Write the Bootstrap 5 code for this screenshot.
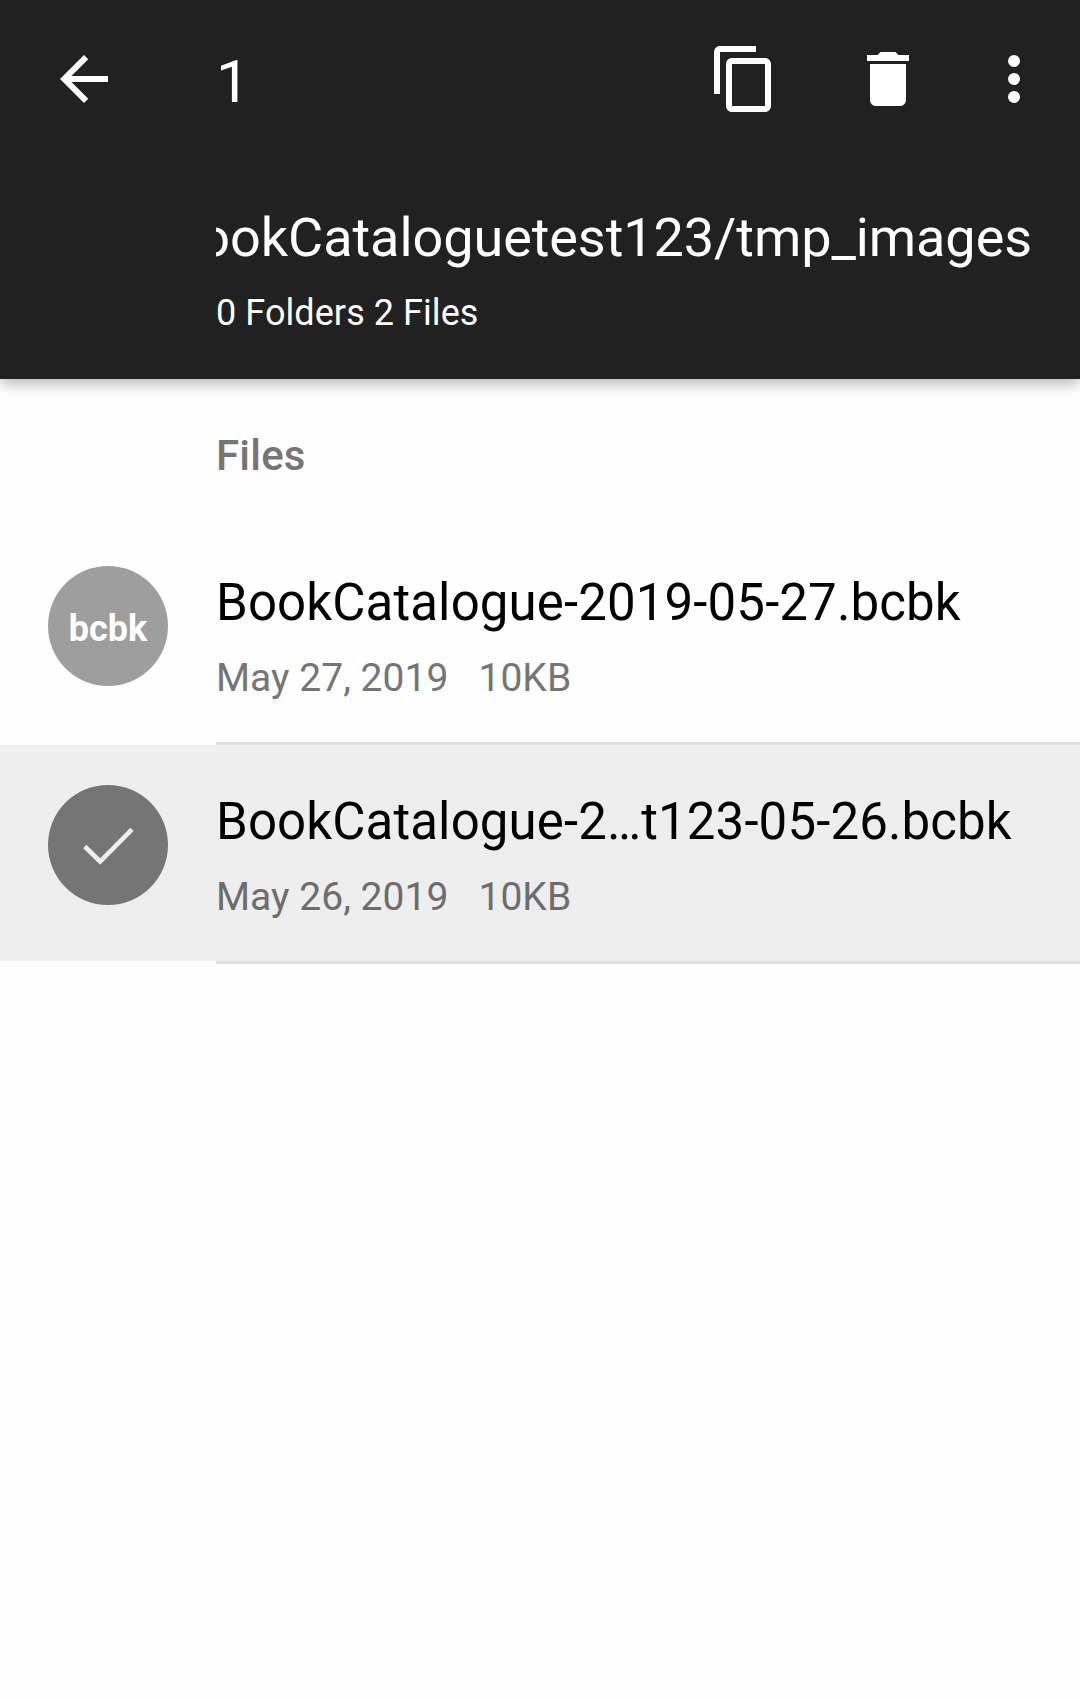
<!DOCTYPE html>
<html lang="en">
<head>
<meta charset="utf-8">
<meta name="viewport" content="width=device-width, initial-scale=1">
<title>Files</title>
<link href="https://cdn.jsdelivr.net/npm/bootstrap@5.3.0/dist/css/bootstrap.min.css" rel="stylesheet">
<style>
body { font-family: Roboto, "Liberation Sans", sans-serif; background: #fefefe; color: #000; min-height: 1699px; }
.app-head { background: #212121; height: 379px; box-shadow: 0 4px 14px rgba(0,0,0,.31); }
.tool-row { height: 158px; padding-left: 48px; padding-right: 30px; }
.tool-btn { width: 72px; height: 72px; color: #fff; }
.tool-btn svg { display: block; width: 72px; height: 72px; fill: currentColor; }
.sel-count { font-size: 60px; line-height: 70px; padding-top: 5px; margin-left: 96px; }
.gap-copy { margin-right: 72px; }
.gap-del { margin-right: 54px; }
.path-box { margin-left: 216px; width: 816px; padding-top: 47px; }
.path-text { font-size: 54px; line-height: 66px; white-space: nowrap; letter-spacing: -.07px; }
.path-info { font-size: 36px; line-height: 42px; margin-top: 21px; letter-spacing: .07px; }
.sect-head { height: 147px; padding: 52px 0 0 216px; font-size: 42px; line-height: 50px; font-weight: 500; color: #757575; letter-spacing: .2px; }
.file-row { height: 216px; padding-left: 48px; }
.file-row.is-picked { background: #eee; }
.file-line { height: 3px; margin-left: 216px; background: #dfdfdf; }
.disc { width: 120px; height: 120px; margin-top: 40px; background: #9e9e9e; font-size: 36px; font-weight: 700; line-height: 40px; padding-top: 5px; }
.is-picked .disc { background: #757575; padding-top: 0; }
.file-body { margin-left: 48px; padding-top: 47px; }
.file-name { font-size: 51px; line-height: 60px; white-space: nowrap; letter-spacing: .12px; }
.file-meta { font-size: 39px; line-height: 46px; margin-top: 22px; gap: 30px; color: #757575; letter-spacing: .04px; }
.is-picked .file-meta { color: #6d6d6d; }
</style>
<script src="https://cdn.jsdelivr.net/npm/bootstrap@5.3.0/dist/js/bootstrap.bundle.min.js"></script>
</head>
<body>
<header class="app-head text-white position-relative">
  <div class="tool-row d-flex align-items-center">
    <button class="tool-btn btn p-0 border-0" aria-label="Back"><svg viewBox="0 0 24 24"><path d="M20 11H7.830l5.590-5.590L12 4l-8 8 8 8 1.410-1.410L7.830 13H20v-2z"/></svg></button>
    <span class="sel-count me-auto">1</span>
    <button class="tool-btn btn p-0 border-0 gap-copy" aria-label="Copy"><svg viewBox="0 0 24 24"><path d="M16 1H4c-1.100 0-2 .9-2 2v14h2V3h12V1zm3 4H8c-1.100 0-2 .9-2 2v14c0 1.100.9 2 2 2h11c1.100 0 2-.9 2-2V7c0-1.100-.9-2-2-2zm0 16H8V7h11v14z"/></svg></button>
    <button class="tool-btn btn p-0 border-0 gap-del" aria-label="Delete"><svg viewBox="0 0 24 24"><path d="M6 19c0 1.100.9 2 2 2h8c1.100 0 2-.9 2-2V7H6v12zM19 4h-3.500l-1-1h-5l-1 1H5v2h14V4z"/></svg></button>
    <button class="tool-btn btn p-0 border-0" aria-label="More"><svg viewBox="0 0 24 24"><circle cx="12" cy="6" r="2"/><circle cx="12" cy="12" r="2"/><circle cx="12" cy="18" r="2"/></svg></button>
  </div>
  <div class="path-box">
    <div class="path-text d-flex justify-content-end overflow-hidden"><span>ookCataloguetest123/tmp_images</span></div>
    <div class="path-info">0 Folders 2 Files</div>
  </div>
</header>
<main>
  <h2 class="sect-head m-0">Files</h2>
  <div class="file-row d-flex align-items-start">
    <div class="disc rounded-circle d-flex align-items-center justify-content-center text-white flex-shrink-0">bcbk</div>
    <div class="file-body">
      <div class="file-name">BookCatalogue-2019-05-27.bcbk</div>
      <div class="file-meta d-flex"><span>May 27, 2019</span><span>10KB</span></div>
    </div>
  </div>
  <div class="file-line"></div>
  <div class="file-row is-picked d-flex align-items-start">
    <div class="disc rounded-circle flex-shrink-0"><svg width="120" height="120" viewBox="0 0 120 120" class="d-block"><path d="M36.800 61.500l15.300 15L84 44.300" fill="none" stroke="#eee" stroke-width="4.600"/></svg></div>
    <div class="file-body">
      <div class="file-name">BookCatalogue-2…t123-05-26.bcbk</div>
      <div class="file-meta d-flex"><span>May 26, 2019</span><span>10KB</span></div>
    </div>
  </div>
  <div class="file-line"></div>
</main>
</body>
</html>
